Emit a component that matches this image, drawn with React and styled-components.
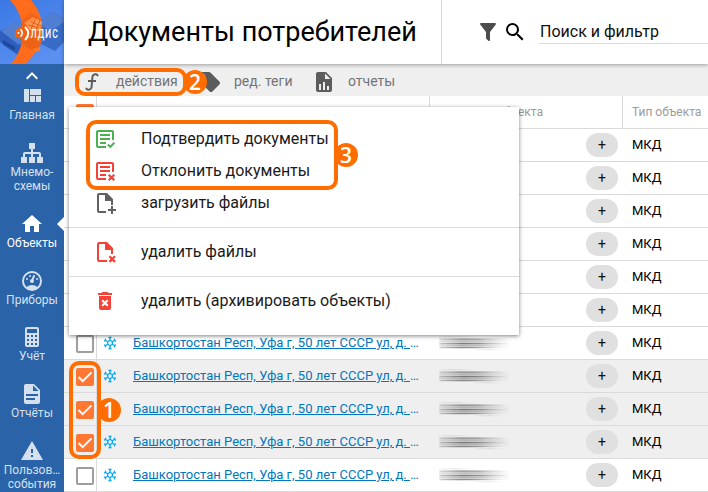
import React from 'react';
import styled, { createGlobalStyle } from 'styled-components';

const ORANGE = '#ff6d00';

const GlobalStyle = createGlobalStyle`
  * { box-sizing: border-box; }
  html, body { margin: 0; padding: 0; overflow: hidden; }
  body { font-family: Roboto, "Liberation Sans", sans-serif; background: #fff; color: #000; }
`;

const icons = {
  up: 'M7.41,15.41L12,10.83L16.59,15.41L18,14L12,8L6,14L7.41,15.41Z',
  quilt: 'M10,5V11H21V5M16,18H21V12H16M4,18H9V5H4M10,18H15V12H10V18Z',
  sitemap: 'M9,2V8H11V11H5C3.89,11 3,11.89 3,13V16H1V22H7V16H5V13H11V16H9V22H15V16H13V13H19V16H17V22H23V16H21V13C21,11.89 20.11,11 19,11H13V8H15V2H9Z',
  home: 'M10,20V14H14V20H19V12H22L12,3L2,12H5V20H10Z',
  gauge: 'M12,2A10,10 0 0,0 2,12A10,10 0 0,0 12,22A10,10 0 0,0 22,12A10,10 0 0,0 12,2M12,4A8,8 0 0,1 20,12C20,14.4 19,16.5 17.3,18C15.9,16.7 14,16 12,16C10,16 8.2,16.7 6.7,18C5,16.5 4,14.4 4,12A8,8 0 0,1 12,4M14,5.89C13.62,5.9 13.26,6.15 13.1,6.54L11.81,9.77L11.71,10C11,10.13 10.41,10.6 10.14,11.26C9.73,12.29 10.23,13.45 11.26,13.86C12.29,14.27 13.45,13.77 13.86,12.74C14.12,12.08 14,11.32 13.57,10.76L13.67,10.5L14.96,7.29L14.97,7.26C15.17,6.75 14.92,6.17 14.41,5.96C14.28,5.91 14.15,5.89 14,5.89M10,6A1,1 0 0,0 9,7A1,1 0 0,0 10,8A1,1 0 0,0 11,7A1,1 0 0,0 10,6M7,9A1,1 0 0,0 6,10A1,1 0 0,0 7,11A1,1 0 0,0 8,10A1,1 0 0,0 7,9M17,9A1,1 0 0,0 16,10A1,1 0 0,0 17,11A1,1 0 0,0 18,10A1,1 0 0,0 17,9Z',
  calculator: 'M7,2H17A2,2 0 0,1 19,4V20A2,2 0 0,1 17,22H7A2,2 0 0,1 5,20V4A2,2 0 0,1 7,2M7,4V8H17V4H7M7,10V12H9V10H7M11,10V12H13V10H11M15,10V12H17V10H15M7,14V16H9V14H7M11,14V16H13V14H11M15,14V16H17V14H15M7,18V20H9V18H7M11,18V20H13V18H11M15,18V20H17V18H15Z',
  doc: 'M13,9H18.5L13,3.5V9M6,2H14L20,8V20A2,2 0 0,1 18,22H6C4.89,22 4,21.1 4,20V4C4,2.89 4.89,2 6,2M15,18V16H6V18H15M18,14V12H6V14H18Z',
  alert: 'M13,14H11V10H13M13,18H11V16H13M1,21H23L12,2L1,21Z',
  filter: 'M14,12V19.88C14.04,20.18 13.94,20.5 13.71,20.71C13.32,21.1 12.69,21.1 12.3,20.71L10.29,18.7C10.06,18.47 9.96,18.16 10,17.87V12H9.97L4.21,4.62C3.87,4.19 3.95,3.56 4.38,3.22C4.57,3.08 4.78,3 5,3H19C19.22,3 19.43,3.08 19.62,3.22C20.05,3.56 20.13,4.19 19.79,4.62L14.03,12H14Z',
  search: 'M9.5,3A6.5,6.5 0 0,1 16,9.5C16,11.11 15.41,12.59 14.44,13.73L14.71,14H15.5L20.5,19L19,20.5L14,15.5V14.71L13.73,14.44C12.59,15.41 11.11,16 9.5,16A6.5,6.5 0 0,1 3,9.5A6.5,6.5 0 0,1 9.5,3M9.5,5C7,5 5,7 5,9.5C5,12 7,14 9.5,14C12,14 14,12 14,9.5C14,7 12,5 9.5,5Z',
  func: 'M15.6,5.29C14.5,5.19 13.53,6 13.43,7.11L13.18,10H16V12H13L12.56,17.07C12.37,19.27 10.43,20.9 8.23,20.7C6.92,20.59 5.82,19.86 5.17,18.83L6.67,17.33C6.91,18.07 7.57,18.64 8.4,18.71C9.5,18.81 10.47,18 10.57,16.89L11,12H8V10H11.17L11.44,6.93C11.63,4.73 13.57,3.1 15.77,3.3C17.08,3.41 18.18,4.14 18.83,5.17L17.33,6.67C17.09,5.93 16.43,5.36 15.6,5.29Z',
  tag: 'M5.5,7A1.5,1.5 0 0,1 4,5.5A1.5,1.5 0 0,1 5.5,4A1.5,1.5 0 0,1 7,5.5A1.5,1.5 0 0,1 5.5,7M21.41,11.58L12.41,2.58C12.05,2.22 11.55,2 11,2H4C2.89,2 2,2.89 2,4V11C2,11.55 2.22,12.05 2.59,12.41L11.58,21.41C11.95,21.77 12.45,22 13,22C13.55,22 14.05,21.77 14.41,21.41L21.41,14.41C21.78,14.05 22,13.55 22,13C22,12.44 21.77,11.94 21.41,11.58Z',
  chart: 'M13,9H18.5L13,3.5V9M6,2H14L20,8V20A2,2 0 0,1 18,22H6C4.89,22 4,21.1 4,20V4C4,2.89 4.89,2 6,2M7,20H9V14H7V20M11,20H13V12H11V20M15,20H17V16H15V20Z',
  snow: 'M20.79,13.95L18.46,14.57L16.46,13.44V10.56L18.46,9.43L20.79,10.05L21.31,8.12L19.54,7.65L20,5.88L18.07,5.36L17.45,7.69L15.45,8.82L13,7.38V5.12L14.71,3.41L13.29,2L12,3.29L10.71,2L9.29,3.41L11,5.12V7.38L8.5,8.82L6.5,7.69L5.92,5.36L4,5.88L4.47,7.65L2.7,8.12L3.22,10.05L5.55,9.43L7.55,10.56V13.45L5.55,14.58L3.22,13.96L2.7,15.89L4.47,16.36L4,18.12L5.93,18.64L6.55,16.31L8.55,15.18L11,16.62V18.88L9.29,20.59L10.71,22L12,20.71L13.29,22L14.7,20.59L13,18.88V16.62L15.5,15.17L17.5,16.3L18.12,18.63L20,18.12L19.53,16.35L21.3,15.88L20.79,13.95M9.5,10.56L12,9.11L14.5,10.56V13.44L12,14.89L9.5,13.44V10.56Z',
  listCheck: 'M5,3H19A2,2 0 0,1 21,5V13H19V5H5V19H13V21H5A2,2 0 0,1 3,19V5A2,2 0 0,1 5,3M7,7H17V9H7V7M7,11H17V13H7V11M7,15H13V17H7V15M14.2,18.2L15.6,16.8L17.3,18.5L20.7,15.1L22.1,16.5L17.3,21.3Z',
  listCross: 'M5,3H19A2,2 0 0,1 21,5V13H19V5H5V19H13V21H5A2,2 0 0,1 3,19V5A2,2 0 0,1 5,3M7,7H17V9H7V7M7,11H17V13H7V11M7,15H13V17H7V15M14.9,16.5L16.5,14.9L18.5,16.9L20.5,14.9L22.1,16.5L20.1,18.5L22.1,20.5L20.5,22.1L18.5,20.1L16.5,22.1L14.9,20.5L16.9,18.5Z',
  filePlus: 'M6,2H14L20,8V14H18V10H12V4H6V20H13V22H6A2,2 0 0,1 4,20V4A2,2 0 0,1 6,2M18,15H20V18H23V20H20V23H18V20H15V18H18Z',
  fileCross: 'M6,2H14L20,8V14H18V10H12V4H6V20H14V22H6A2,2 0 0,1 4,20V4A2,2 0 0,1 6,2M15.6,17.1L17.2,15.5L19.2,17.5L21.2,15.5L22.8,17.1L20.8,19.1L22.8,21.1L21.2,22.7L19.2,20.7L17.2,22.7L15.6,21.1L17.6,19.1Z',
  trash: 'M6,19A2,2 0 0,0 8,21H16A2,2 0 0,0 18,19V7H6V19M8.46,11.88L9.87,10.47L12,12.59L14.12,10.47L15.53,11.88L13.41,14L15.53,16.12L14.12,17.53L12,15.41L9.88,17.53L8.47,16.12L10.59,14L8.46,11.88M15.5,4L14.5,3H9.5L8.5,4H5V6H19V4H15.5Z',
};

const Svg = styled.svg`
  display: block;
  flex: none;
  width: ${p => p.$size || 24}px;
  height: ${p => p.$size || 24}px;
  fill: ${p => p.$color || 'currentColor'};
`;
const Icon = ({ name, size, color }) => (
  <Svg viewBox="0 0 24 24" $size={size} $color={color}><path fillRule="evenodd" d={icons[name]} /></Svg>
);

const Page = styled.div`
  position: relative;
  display: flex;
  width: 708px;
  height: 492px;
  overflow: hidden;
`;
const Sidebar = styled.nav`
  flex: none;
  width: 64px;
  display: flex;
  flex-direction: column;
  background: #2a63a8;
  color: #fff;
`;
const Logo = styled.svg`
  display: block;
  flex: none;
  width: 64px;
  height: 64px;
`;
const ScrollUp = styled.div`
  flex: none;
  height: 20px;
  display: flex;
  justify-content: center;
`;
const NavItem = styled.a`
  position: relative;
  flex: none;
  height: ${p => p.$height}px;
  display: flex;
  flex-direction: column;
  align-items: center;
  color: ${p => (p.$active ? '#fff' : '#d4e0ee')};
`;
const NavLabel = styled.span`
  width: 64px;
  text-align: center;
  white-space: pre-line;
  font-size: 12px;
  line-height: 14px;
`;
const ActiveMark = styled.i`
  position: absolute;
  right: 0;
  top: 5px;
  border: 7px solid transparent;
  border-left: 0;
  border-right-color: #fff;
`;
const Main = styled.main`
  flex: 1;
  min-width: 0;
  display: flex;
  flex-direction: column;
`;
const Header = styled.header`
  position: relative;
  z-index: 1;
  flex: none;
  height: 64px;
  display: flex;
  background: #fff;
  box-shadow: 0 1px 4px rgba(0, 0, 0, 0.35);
`;
const Title = styled.h1`
  margin: 0;
  width: 378px;
  padding-left: 24px;
  border-right: 1px solid #dcdcdc;
  font-weight: 400;
  font-size: 27px;
  line-height: 64px;
  white-space: nowrap;
`;
const Tools = styled.div`
  display: flex;
  flex: 1;
  gap: 3px;
  padding: 20px 0 0 34px;
`;
const SearchField = styled.div`
  flex: 1;
  height: 24px;
  margin-left: 9px;
  padding-left: 1px;
  border-bottom: 1px solid #dcdcdc;
  font-size: 16px;
  line-height: 23px;
  color: #111;
  white-space: nowrap;
`;
const Toolbar = styled.div`
  flex: none;
  height: 32px;
  display: flex;
  align-items: center;
  padding: 4px 0 0 16px;
  background: #efefef;
  color: #5c5c5c;
`;
const Action = styled.div`
  width: ${p => p.$width}px;
  display: flex;
  align-items: center;
  gap: 12px;
`;
const ActionLabel = styled.span`
  font-size: 14px;
  line-height: 20px;
  color: #757575;
  white-space: nowrap;
  margin-top: -2px;
`;
const Table = styled.div`
  flex: 1;
`;
const Row = styled.div`
  display: grid;
  grid-template-columns: 33px 333px 193px 1fr;
  height: 33px;
  border-bottom: 1px solid #dadada;
  background: ${p => (p.$selected ? '#efefef' : '#fff')};
`;
const HeadCell = styled.div`
  display: flex;
  align-items: center;
  justify-content: ${p => (p.$end ? 'flex-end' : 'flex-start')};
  padding: ${p => (p.$end ? '0 79px 0 0' : '0 0 0 9px')};
  border-right: ${p => (p.$last ? 0 : 1)}px solid #dadada;
  font-size: 12px;
  color: #9b9b9b;
  white-space: nowrap;
`;
const CheckCell = styled.div`
  display: flex;
  align-items: center;
  padding: 2px 0 0 12px;
  border-right: 1px solid #dadada;
`;
const Check = styled.span`
  flex: none;
  display: grid;
  place-items: center;
  width: 18px;
  height: 18px;
  border-radius: 2px;
  border: ${p => (p.$on ? 0 : 2)}px solid #9e9e9e;
  background: ${p => (p.$on ? '#ff7733' : '#fff')};
`;
const NameCell = styled.div`
  display: flex;
  align-items: center;
  gap: 15px;
  padding-left: 5px;
  min-width: 0;
`;
const Link = styled.a`
  width: 288px;
  overflow: hidden;
  text-overflow: ellipsis;
  white-space: nowrap;
  font-size: 13px;
  line-height: 18px;
  color: #0277bd;
  text-decoration: underline;
`;
const AddressCell = styled.div`
  display: flex;
  align-items: center;
  justify-content: space-between;
  padding: 0 5px 0 9px;
`;
const SmudgeArt = styled.svg`
  display: block;
  margin-top: 2px;
`;
const Chip = styled.button`
  width: 32px;
  height: 24px;
  padding: 0;
  border: 0;
  border-radius: 12px;
  background: #e0e0e0;
  font: 400 14px/22px Roboto, sans-serif;
  color: #111;
`;
const TypeCell = styled.div`
  padding-left: 9px;
  font-size: 13px;
  line-height: 31px;
`;
const Menu = styled.div`
  position: absolute;
  left: 69px;
  top: 107px;
  width: 450px;
  height: 228px;
  padding-top: 16px;
  z-index: 2;
  background: #fff;
  box-shadow: 0 1px 4px rgba(0, 0, 0, 0.5);
`;
const MenuItem = styled.div`
  display: flex;
  align-items: center;
  gap: 24px;
  height: 32px;
  padding-left: 24px;
  font-size: 16px;
  color: #1b1b1b;
  white-space: nowrap;
`;
const MenuText = styled.span`
  line-height: 20px;
`;
const Divider = styled.div`
  height: 1px;
  margin: 8px 0;
  background: #dcdcdc;
`;
const Frame = styled.div`
  position: absolute;
  z-index: 3;
  left: ${p => p.$x}px;
  top: ${p => p.$y}px;
  width: ${p => p.$w}px;
  height: ${p => p.$h}px;
  border: 4px solid ${ORANGE};
  border-radius: 10px;
`;
const Badge = styled.div`
  position: absolute;
  z-index: 4;
  left: ${p => p.$x}px;
  top: ${p => p.$y}px;
  width: 24px;
  height: 24px;
  border-radius: 50%;
  background: ${ORANGE};
  color: #fff;
  font: 600 21px/24px "Open Sans", sans-serif;
  text-align: center;
`;

const LogoArt = () => (
  <Logo viewBox="0 0 64 64">
    <defs>
      <linearGradient id="sky" x1="0" y1="0" x2="0.5" y2="1">
        <stop offset="0" stopColor="#3a78e4" />
        <stop offset="1" stopColor="#5b8ff0" />
      </linearGradient>
      <clipPath id="arc"><path d="M10,0C27,18 27,46 11,64H25C47,46 47,18 31,0Z" /></clipPath>
    </defs>
    <rect width="64" height="64" fill="url(#sky)" />
    <g>
      <path d="M0,42L6,47L18,55L36,46L35,36L14,24L0,31Z" fill="#2e5fbe" />
      <path d="M1,31L14,22L34,34L19,45Z" fill="#527fcf" />
      <path d="M37,23L53,12L64,18V42L55,51L37,42Z" fill="#376bc6" />
      <path d="M37,23L53,12L64,18V22L51,31Z" fill="#4f7ed2" />
      <path d="M3,40L15,47V51L3,44Z" fill="#1d489c" />
    </g>
    <path d="M10,0C27,18 27,46 11,64H25C47,46 47,18 31,0Z" fill="#ff6c1c" />
    <g clipPath="url(#arc)">
      <path d="M19,22L31,13L43,20V43L31,50L19,42Z" fill="#f0641a" />
      <path d="M24,23L33,17L43,23L34,30Z" fill="#ff8a3e" />
    </g>
    <path d="M15,31L24,24L40,28L42,42L36,51L28,47L24,40L15,37Z" fill="#ee6216" />
    <path d="M26,24L38,19L42,22L40,31L29,30Z" fill="#ff9a55" />
    <path d="M28,25L39,28M31,22L41,26M31,29L35,20M36,30L40,20" stroke="#dd5812" strokeWidth="0.9" />
    <path d="M33,49A3.5,3.5 0 1,0 40,47" fill="#ff7a2c" />
    <g fill="none" stroke="#fff" strokeLinecap="round">
      <path d="M21,30Q23.5,33 21,36" strokeWidth="1.7" />
      <path d="M25.5,27.5Q31,33 25.5,39.5" strokeWidth="2" />
    </g>
    <circle cx="18.5" cy="33" r="1" fill="#fff" />
    <text transform="translate(30.5 37.5) scale(0.64 1)" fill="#fff" fontFamily="Roboto" fontWeight="500" fontSize="13.5" letterSpacing="1.5">ЛДИС</text>
  </Logo>
);

const strokes = [
  [0, 0, 36, 2, 0.1], [2, 0, 66, 3, 0.32], [5, 0, 66, 2, 0.12], [7, 0, 68, 2, 0.55],
  [9, 0, 62, 2, 0.2], [11, 0, 60, 2, 0.45], [13, 36, 66, 2, 0.08],
];
const Smudge = () => (
  <SmudgeArt width="72" height="16" viewBox="0 0 72 16">
    <defs>
      <linearGradient id="ink">
        <stop offset="0" stopColor="#333" stopOpacity="0.35" />
        <stop offset="0.35" stopColor="#333" />
        <stop offset="0.6" stopColor="#333" stopOpacity="0.8" />
        <stop offset="1" stopColor="#777" stopOpacity="0.1" />
      </linearGradient>
      <filter id="soft"><feGaussianBlur stdDeviation="1 0.45" /></filter>
    </defs>
    <g filter="url(#soft)">
      <rect x="0" y="3" width="70" height="9" fill="url(#ink)" opacity="0.22" />
      {strokes.map(([y, x, end, h, o]) => (
        <rect key={y} x={x} y={y} width={end - x} height={h - 0.7} fill="url(#ink)" opacity={o} />
      ))}
    </g>
  </SmudgeArt>
);

const nav = [
  ['quilt', 'Главная', 57],
  ['sitemap', 'Мнемо-\nсхемы', 71],
  ['home', 'Объекты', 57, true],
  ['gauge', 'Приборы', 56],
  ['calculator', 'Учёт', 57],
  ['doc', 'Отчёты', 57],
  ['alert', 'Пользов…\nсобытия', 53],
];
const rows = Array.from({ length: 11 }, (_, i) => ({ id: i, selected: i >= 7 && i <= 9 }));

export default function App() {
  return (
    <Page>
      <GlobalStyle />
      <Sidebar>
        <LogoArt />
        <ScrollUp><Icon name="up" /></ScrollUp>
        {nav.map(([icon, label, height, active]) => (
          <NavItem key={icon} $height={height} $active={active}>
            <Icon name={icon} />
            <NavLabel>{label}</NavLabel>
            {active && <ActiveMark />}
          </NavItem>
        ))}
      </Sidebar>
      <Main>
        <Header>
          <Title>Документы потребителей</Title>
          <Tools>
            <Icon name="filter" color="#4d4d4d" />
            <Icon name="search" color="#000" />
            <SearchField>Поиск и фильтр</SearchField>
          </Tools>
        </Header>
        <Toolbar>
          <Action $width={118}><Icon name="func" /><ActionLabel>действия</ActionLabel></Action>
          <Action $width={114}><Icon name="tag" /><ActionLabel>ред. теги</ActionLabel></Action>
          <Action $width={100}><Icon name="chart" /><ActionLabel>отчеты</ActionLabel></Action>
        </Toolbar>
        <Table>
          <Row>
            <CheckCell><Check $on /></CheckCell>
            <HeadCell />
            <HeadCell $end>Адрес объекта</HeadCell>
            <HeadCell $last>Тип объекта</HeadCell>
          </Row>
          {rows.map(({ id, selected }) => (
            <Row key={id} $selected={selected}>
              <CheckCell>
                <Check $on={selected}>
                  {selected && (
                    <svg width="18" height="18" viewBox="0 0 18 18">
                      <path d="M2.5,9L6.7,13.2L15.5,4.4" fill="none" stroke="#fafafa" strokeWidth="2" />
                    </svg>
                  )}
                </Check>
              </CheckCell>
              <NameCell>
                <Icon name="snow" size={16} color="#03a9f4" />
                <Link>Башкортостан Респ, Уфа г, 50 лет СССР ул, д. 12</Link>
              </NameCell>
              <AddressCell><Smudge /><Chip>+</Chip></AddressCell>
              <TypeCell>МКД</TypeCell>
            </Row>
          ))}
        </Table>
      </Main>
      <Menu>
        <MenuItem><Icon name="listCheck" color="#4caf50" /><MenuText>Подтвердить документы</MenuText></MenuItem>
        <MenuItem><Icon name="listCross" color="#f44336" /><MenuText>Отклонить документы</MenuText></MenuItem>
        <MenuItem><Icon name="filePlus" color="#616161" /><MenuText>загрузить файлы</MenuText></MenuItem>
        <Divider />
        <MenuItem><Icon name="fileCross" color="#f44336" /><MenuText>удалить файлы</MenuText></MenuItem>
        <Divider />
        <MenuItem><Icon name="trash" color="#f44336" /><MenuText>удалить (архивировать объекты)</MenuText></MenuItem>
      </Menu>
      <Frame $x={75} $y={68} $w={112} $h={28} />
      <Badge $x={183} $y={70}>2</Badge>
      <Frame $x={86} $y={120} $w={252} $h={70} />
      <Badge $x={334} $y={143}>3</Badge>
      <Frame $x={69} $y={361} $w={32} $h={98} />
      <Badge $x={97} $y={398}>1</Badge>
    </Page>
  );
}
